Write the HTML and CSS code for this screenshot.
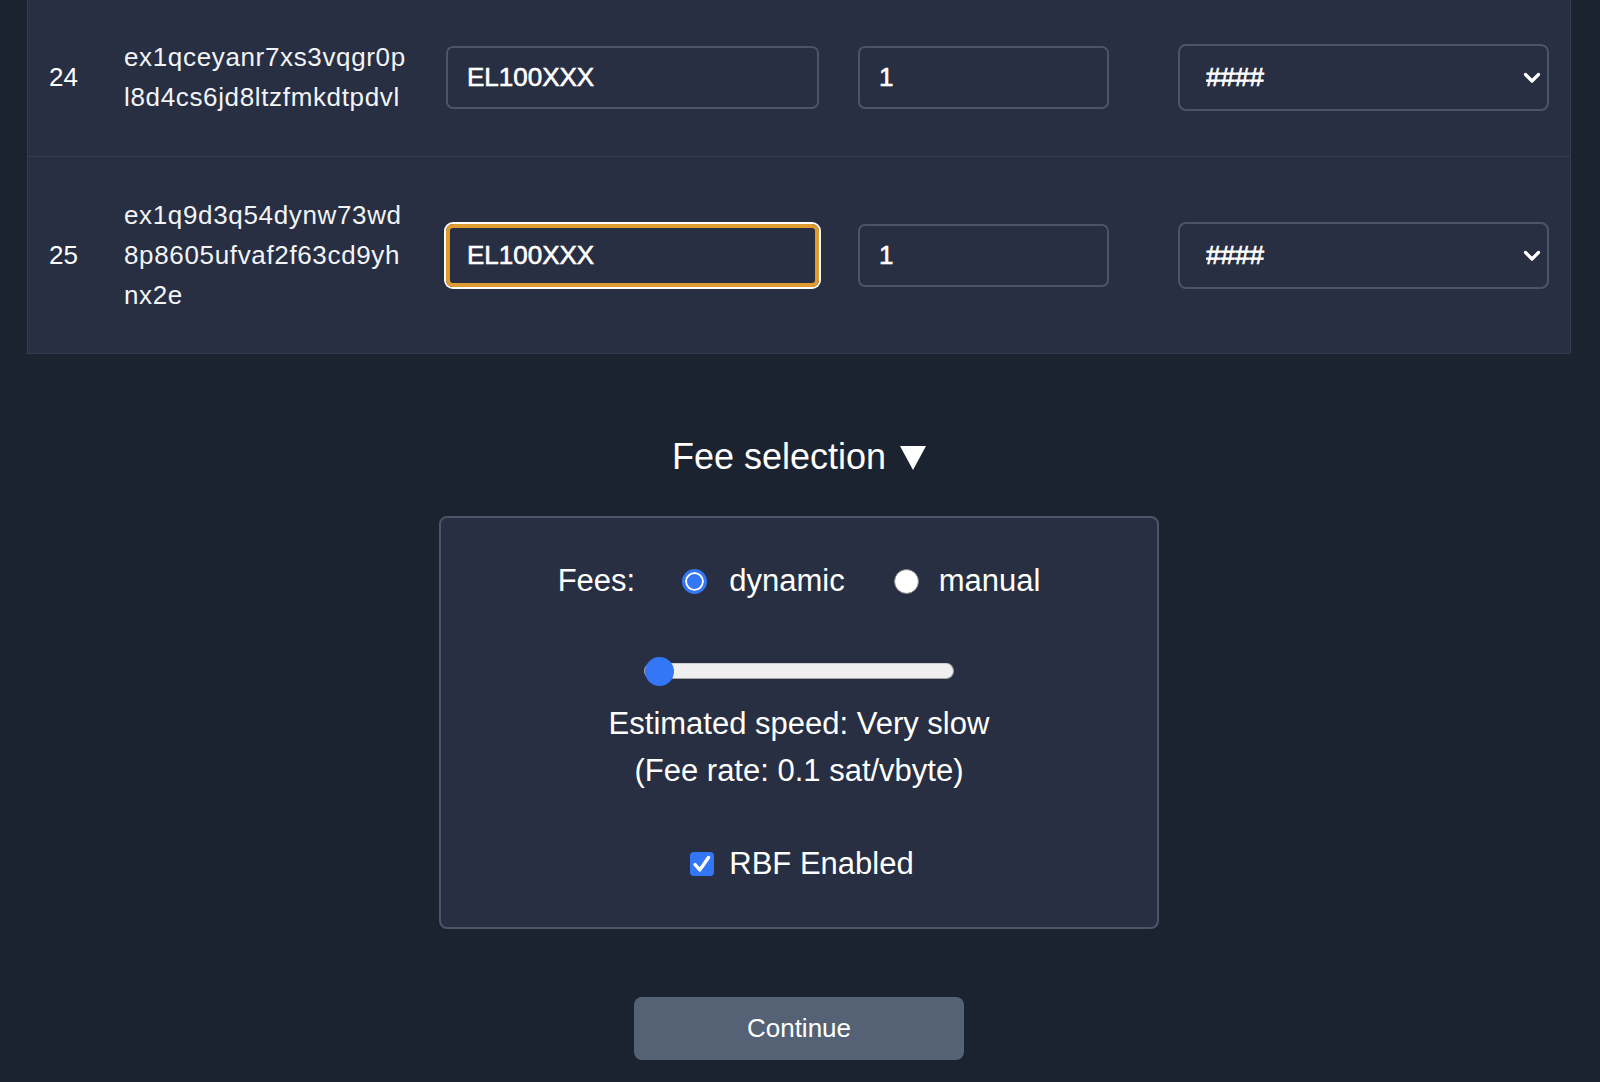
FILE: index.html
```html
<!DOCTYPE html>
<html lang="en">
<head>
<meta charset="utf-8">
<title>Fee selection</title>
<link rel="stylesheet" href="styles.css">
</head>
<body>
<div class="page">
  <div class="table">
    <div class="row">
      <div class="num">24</div>
      <div class="addr">ex1qceyanr7xs3vqgr0p<br>l8d4cs6jd8ltzfmkdtpdvl</div>
      <div class="cell"><input class="field asset" type="text" value="EL100XXX"></div>
      <div class="cell"><input class="field qty" type="text" value="1"></div>
      <div class="cell">
        <div class="select-wrap">
          <select class="select"><option>####</option></select>
          <svg class="chev" width="18" height="12" viewBox="0 0 18 12"><polyline points="2.5,2.5 9,9 15.5,2.5" fill="none" stroke="#fff" stroke-width="3.2" stroke-linecap="round" stroke-linejoin="round"/></svg>
        </div>
      </div>
    </div>
    <div class="row">
      <div class="num">25</div>
      <div class="addr">ex1q9d3q54dynw73wd<br>8p8605ufvaf2f63cd9yh<br>nx2e</div>
      <div class="cell"><input class="field asset focused" type="text" value="EL100XXX"></div>
      <div class="cell"><input class="field qty" type="text" value="1"></div>
      <div class="cell">
        <div class="select-wrap">
          <select class="select"><option>####</option></select>
          <svg class="chev" width="18" height="12" viewBox="0 0 18 12"><polyline points="2.5,2.5 9,9 15.5,2.5" fill="none" stroke="#fff" stroke-width="3.2" stroke-linecap="round" stroke-linejoin="round"/></svg>
        </div>
      </div>
    </div>
  </div>

  <section class="fees">
    <div class="summary">Fee selection<svg class="tri" width="26" height="24" viewBox="0 0 26 24"><polygon points="0,0 26,0 13,24" fill="#fff"/></svg></div>
    <div class="card">
      <div class="fee-mode">
        <span class="lbl">Fees:</span>
        <label class="opt"><span class="radio on"></span><span>dynamic</span></label>
        <label class="opt opt-2"><span class="radio"></span><span>manual</span></label>
      </div>
      <input class="slider" type="range" min="0" max="10" value="0">
      <div class="speed">Estimated speed: Very slow<br>(Fee rate: 0.1 sat/vbyte)</div>
      <label class="rbf"><span class="check"><svg width="24" height="24" viewBox="0 0 24 24"><polyline points="5,12.5 9.8,18 18.5,5.5" fill="none" stroke="#fff" stroke-width="3.4" stroke-linecap="round" stroke-linejoin="round"/></svg></span><span>RBF Enabled</span></label>
    </div>
    <button class="continue" type="button">Continue</button>
  </section>
</div>
</body>
</html>
```

FILE: styles.css
```css
* { box-sizing: border-box; }

html, body {
  margin: 0;
  background: #1b2330;
}

body {
  font-family: "Liberation Sans", Arial, sans-serif;
  color: #ffffff;
}

.page {
  padding: 0 29px 0 27px;
}

/* ---------- table ---------- */
.table {
  background: #282f42;
  border: 1px solid #343d50;
  border-top: none;
}

.row {
  display: grid;
  grid-template-columns: 75px 322px 412px 320px 371px;
  align-items: center;
  padding: 37px 0 39px 21px;
  border-bottom: 1px solid #353e51;
}

.row:last-child {
  border-bottom: none;
  padding: 38px 0 38px 21px;
}

.num {
  font-size: 26px;
  line-height: 40px;
}

.addr {
  font-size: 26px;
  line-height: 40px;
  letter-spacing: 0.65px;
  white-space: nowrap;
  color: #f2f4f7;
}

.cell {
  display: flex;
  align-items: center;
}

.field {
  height: 63px;
  border: 2px solid #4a5568;
  border-radius: 7px;
  background: transparent;
  color: #ffffff;
  font-family: "Liberation Sans", Arial, sans-serif;
  font-size: 26px;
  font-weight: 400;
  -webkit-text-stroke: 0.6px #ffffff;
  padding: 0 19px;
  margin: 0;
  outline: none;
}

.asset { width: 373px; }
.qty { width: 251px; }

.field.focused {
  border: 4px solid #de9b2f;
  padding-left: 17px;
  box-shadow: 0 0 0 2px #ffffff;
}

.select-wrap {
  position: relative;
  width: 371px;
  height: 67px;
}

.select {
  -webkit-appearance: none;
  appearance: none;
  width: 100%;
  height: 100%;
  border: 2px solid #4a5568;
  border-radius: 8px;
  background: transparent;
  color: #ffffff;
  font-family: "Liberation Sans", Arial, sans-serif;
  font-size: 26px;
  font-weight: 400;
  -webkit-text-stroke: 0.7px #ffffff;
  padding: 0 0 0 26px;
  margin: 0;
  outline: none;
}

.chev {
  position: absolute;
  right: 8px;
  top: 28px;
  pointer-events: none;
}

/* ---------- fee selection ---------- */
.fees {
  text-align: center;
}

.summary {
  margin-top: 82px;
  display: flex;
  justify-content: center;
  align-items: center;
  font-size: 36px;
  line-height: 42px;
}

.tri {
  margin-left: 14px;
  margin-top: 1px;
}

.card {
  width: 720px;
  margin: 38px auto 0;
  background: #282f42;
  border: 2px solid #4a5568;
  border-radius: 8px;
  padding: 45px 0 45px;
}

.fee-mode {
  display: flex;
  justify-content: center;
  align-items: center;
  font-size: 31px;
  line-height: 36px;
}

.opt {
  display: flex;
  align-items: center;
  gap: 22px;
  margin-left: 47px;
}

.opt-2 {
  gap: 20px;
  margin-left: 49px;
}

.radio {
  display: inline-block;
  width: 25px;
  height: 25px;
  border-radius: 50%;
  background: #ffffff;
  border: 1px solid #7d7d7d;
}

.radio.on {
  background: #3376f6;
  border: 3px solid #3376f6;
  box-shadow: inset 0 0 0 2px #ffffff;
}

.slider {
  -webkit-appearance: none;
  appearance: none;
  display: block;
  width: 310px;
  height: 30px;
  margin: 57px auto 0;
  padding: 0;
  background: transparent;
}

.slider::-webkit-slider-runnable-track {
  height: 16px;
  border-radius: 8px;
  background: #efefef;
  border: 1px solid #a3a3a3;
  border-top-color: #cfcfcf;
}

.slider::-webkit-slider-thumb {
  -webkit-appearance: none;
  appearance: none;
  width: 29px;
  height: 29px;
  border-radius: 50%;
  background: #3376f6;
  border: none;
  margin-top: -7.5px;
}

.speed {
  margin-top: 14px;
  font-size: 31px;
  line-height: 47px;
}

.rbf {
  margin-top: 52px;
  padding-left: 6px;
  display: flex;
  justify-content: center;
  align-items: center;
  gap: 15px;
  font-size: 31px;
  line-height: 36px;
}

.check {
  display: inline-block;
  width: 24px;
  height: 24px;
  border-radius: 4px;
  background: #3376f6;
}

.check svg {
  display: block;
}

.continue {
  display: block;
  width: 330px;
  height: 63px;
  margin: 68px auto 0;
  border: none;
  border-radius: 8px;
  background: #556275;
  color: #ffffff;
  font-family: "Liberation Sans", Arial, sans-serif;
  font-size: 26px;
}
```
